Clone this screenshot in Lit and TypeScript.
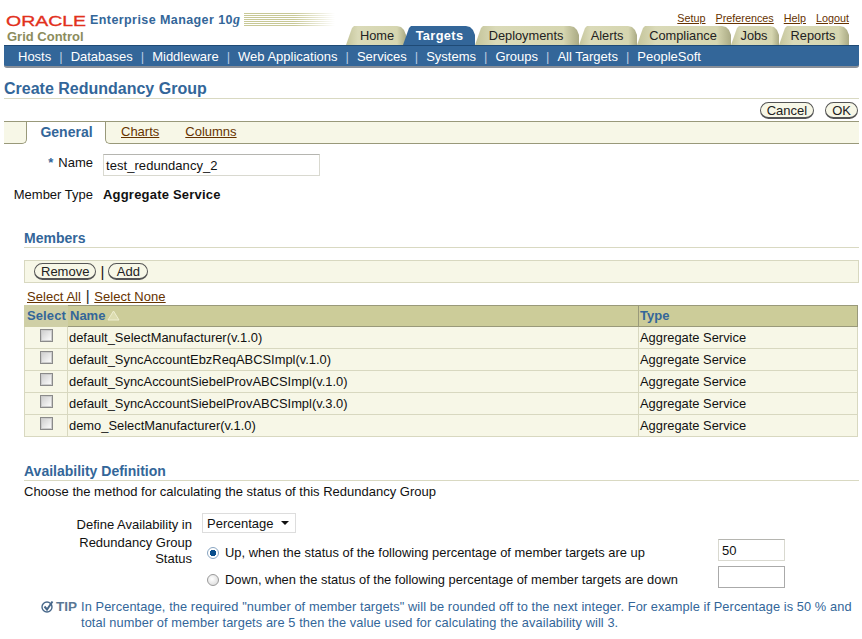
import { LitElement, html, css } from "lit";
import { customElement } from "lit/decorators.js";

const tabs = [
  { t: "Home", w: 60 },
  { t: "Targets", w: 72, active: true },
  { t: "Deployments", w: 104 },
  { t: "Alerts", w: 58 },
  { t: "Compliance", w: 94 },
  { t: "Jobs", w: 48 },
  { t: "Reports", w: 70 },
];
const nav = ["Hosts", "Databases", "Middleware", "Web Applications", "Services", "Systems", "Groups", "All Targets", "PeopleSoft"];
const rows = [
  "default_SelectManufacturer(v.1.0)",
  "default_SyncAccountEbzReqABCSImpl(v.1.0)",
  "default_SyncAccountSiebelProvABCSImpl(v.1.0)",
  "default_SyncAccountSiebelProvABCSImpl(v.3.0)",
  "demo_SelectManufacturer(v.1.0)",
];

@customElement("app-root")
export class AppRoot extends LitElement {
  static styles = css`
    :host { display: block; width: 862px; height: 639px; overflow: hidden; background: #fff; color: #111; font: 13px/15px "Liberation Sans", Arial, sans-serif; }
    a { color: #663300; text-decoration: underline; }
    .mast { display: flex; justify-content: space-between; height: 45px; }
    .brand { padding: 13px 0 0 6px; }
    .brand-top { display: flex; align-items: flex-start; height: 19px; }
    .oracle { display: block; width: 81px; height: 15px; }
    .oracle text { font: 15.5px "Liberation Sans", Arial, sans-serif; fill: #e2311d; stroke: #e2311d; stroke-width: .35px; }
    .em { margin-left: 3px; color: #336699; font-weight: bold; font-size: 12.5px; letter-spacing: .42px; white-space: nowrap; line-height: 14px; }
    .em i { font-family: "Liberation Serif", serif; font-size: 14px; }
    .stripes { width: 91px; height: 13px; margin: 0 0 0 4px; background: linear-gradient(to right, transparent 55%, #fff), repeating-linear-gradient(to bottom, #c8c896 0 1px, #fff 1px 2px); }
    .grid { margin: -3px 0 0 1px; color: #8c8c5c; font-weight: bold; font-size: 13px; }
    .right { display: flex; flex-direction: column; align-items: flex-end; padding-right: 13px; }
    .global { display: flex; gap: 10px; height: 26px; padding: 11px 0 0; box-sizing: border-box; font-size: 10.8px; line-height: 14px; }
    .tabs { display: flex; height: 19px; }
    .tab { display: flex; align-items: center; justify-content: center; box-sizing: border-box; padding: 0 2px 1px 0; color: #222; font-size: 12.8px; background: linear-gradient(to right, #c4c49a, #dadab8 20%, #d6d6b0 85%, #aaaa84); clip-path: polygon(0 100%, 6px 2px, 8px 0, calc(100% - 9px) 0, calc(100% - 5px) 1px, calc(100% - 2px) 4px, 100% 9px, 100% 100%); }
    .tab:first-child { padding: 0 0 1px 2px; }
    .tab.active { padding: 0 0 1px 1px; color: #fff; font-weight: bold; background: #336699; letter-spacing: .35px; margin-left: -3px; z-index: 1; }
    .nav { display: flex; align-items: center; height: 23px; margin: 0 3px 0 4px; padding: 0 0 0 14px; box-sizing: border-box; background: #336699; border-top: 1px solid #1f4a75; border-bottom: 2px solid #8a9099; border-radius: 0 0 3px 3px; color: #fff; font-size: 13px; white-space: nowrap; }
    .nav span.sep { margin: 0 8px; color: #b8cbe0; }
    h1 { margin: 12px 3px 0 4px; height: 18px; border-bottom: 1px solid #d9d9c2; color: #336699; font-size: 16px; line-height: 18px; }
    .actions { display: flex; justify-content: flex-end; gap: 11px; margin: 3px 4px 0 0; height: 18px; }
    .btn { display: inline-flex; align-items: center; height: 17px; box-sizing: border-box; padding: 0 6px; border: 1px solid #555; border-bottom-width: 2px; border-right-width: 1.5px; border-radius: 9px; background: #f7f7e7; color: #222; font-size: 13px; }
    .btn.add { padding: 0 7.5px; }
    .subtabs { display: flex; height: 23px; margin: 1px 3px 0 4px; box-sizing: border-box; border-top: 1px solid #99997a; }
    .sub-l, .sub-r { background: #f7f7e7; border-bottom: 1px solid #99997a; box-sizing: border-box; }
    .sub-l { width: 23px; border-right: 1px solid #99997a; border-radius: 0 0 5px 0; }
    .sub-r { flex: 1; border-left: 1px solid #99997a; border-radius: 0 0 0 5px; padding-left: 15px; line-height: 20px; }
    .sub-r a + a { margin-left: 26px; }
    .sel { width: 78px; color: #336699; font-weight: bold; font-size: 14px; text-align: center; line-height: 21px; padding-left: 1px; box-sizing: border-box; }
    .form1 { display: grid; grid-template-columns: 93px 1fr; column-gap: 10px; margin-top: 10px; align-items: start; }
    .form1 label { text-align: right; white-space: nowrap; }
    .name-l { padding-top: 1px; }
    .req { color: #336699; font-weight: bold; margin-right: 5px; }
    .input { box-sizing: border-box; border: 1px solid #d9d9d0; border-top-color: #b5b5b0; background: #fff; display: flex; align-items: center; padding: 1px 0 0 2px; height: 22px; }
    .name { width: 217px; letter-spacing: .06px; }
    .mt { margin-top: 10px; height: 18px; line-height: 18px; grid-column: 2; font-weight: bold; letter-spacing: .2px; }
    .mtl { margin-top: 10px; height: 18px; line-height: 18px; }
    h2 { margin: 0 3px 0 24px; color: #336699; font-size: 14px; line-height: 17px; height: 17px; border-bottom: 1px solid #d9d9c2; }
    .h-m { margin-top: 26px; }
    .toolbar { display: flex; align-items: center; gap: 4px; box-sizing: border-box; height: 23px; margin: 12px 3px 0 24px; padding-left: 9px; background: #f7f7e7; border: 1px solid #d8d8c0; }
    .toolbar .sep { font-size: 15px; }
    .sel-links { margin: 3px 3px 0 27px; height: 19px; line-height: 19px; font-size: 13px; letter-spacing: .05px; }
    .sel-links span { font-size: 15px; margin: 0 1px; color: #222; }
    table { border-collapse: collapse; table-layout: fixed; width: 834px; margin: 0 3px 0 24px; }
    th { height: 18px; padding: 0 0 2px 1px; background: #cccc99; color: #336699; font-size: 13px; text-align: left; border: 1px solid #99997a; border-left: 1px solid #fff; line-height: 15px; }
    th.s { background: #cfcfa6; border-color: #cfcfa6; padding-left: 2px; letter-spacing: .1px; }
    th.n { padding-left: 2px; }
    td { height: 20px; padding: 0 0 1px 1px; background: #f7f7e7; border: 1px solid #d8d8c0; font-size: 12.9px; white-space: nowrap; }
    td.c { text-align: center; }
    .tri { display: inline-block; vertical-align: -1px; margin-left: 2px; }
    .chk { display: inline-block; box-sizing: border-box; width: 13px; height: 13px; border: 1px solid #8a8a8a; background: linear-gradient(135deg, #ccc, #fff); box-shadow: inset 0 0 0 1px #ccc; vertical-align: 1px; }
    .h-a { margin-top: 26px; }
    .intro { margin: 3px 0 0 24px; height: 21px; }
    .avail { display: grid; grid-template-columns: 192px 1fr; column-gap: 10px; margin-top: 1px; }
    .avail .l { text-align: right; }
    .selectbox { display: flex; align-items: center; justify-content: space-between; box-sizing: border-box; width: 94px; height: 20px; margin-top: 7px; padding: 0 6px 0 4px; border: 1px solid #ddd; background: #fff; }
    .caret { width: 0; height: 0; border: 4px solid transparent; border-top: 4px solid #111; border-bottom: 0; }
    .opts { margin-top: 6px; }
    .opt { display: flex; align-items: center; height: 27px; width: 583px; }
    .opt .txt { margin-left: 6px; flex: 1; white-space: nowrap; font-size: 12.9px; }
    .radio { width: 12px; height: 12px; margin-left: 5px; border-radius: 50%; box-sizing: border-box; border: 1px solid #999; background: radial-gradient(circle at 40% 40%, #fff, #d5d5d5); }
    .radio.on { background: radial-gradient(circle, #0a4e8c 0 3px, #fff 3.5px); border-color: #8aa6c2; }
    .opt .input { width: 67px; flex: none; padding-left: 3px; margin-bottom: 5px; }
    .opt .input.dark { border: 1px solid #aaa; }
    .lab2 { padding-top: 2px; line-height: 16px; }
    .lab1 { padding-top: 11px; line-height: 15px; }
    .tip { display: flex; margin: 6px 0 0 41px; color: #336699; font-size: 12.8px; line-height: 16px; }
    .tip svg { flex: none; margin-top: 1px; }
    .tip b { flex: none; margin: 0 4px 0 2px; color: #5a7895; font-size: 13.5px; }
    .tip div { letter-spacing: .09px; width: 790px; white-space: nowrap; }
  `;

  render() {
    return html`
      <div class="mast">
        <div class="brand">
          <div class="brand-top">
            <svg class="oracle" viewBox="0 0 81 15"><text x="0" y="13" textLength="80" lengthAdjust="spacingAndGlyphs">ORACLE</text></svg>
            <span class="em">Enterprise Manager 10<i>g</i></span>
            <div class="stripes"></div>
          </div>
          <div class="grid">Grid Control</div>
        </div>
        <div class="right">
          <div class="global"><a>Setup</a><a>Preferences</a><a>Help</a><a>Logout</a></div>
          <div class="tabs">
            ${tabs.map((t) => html`<div class="tab ${t.active ? "active" : ""}" style="width:${t.w}px">${t.t}</div>`)}
          </div>
        </div>
      </div>
      <div class="nav">
        ${nav.map((n, i) => html`${i ? html`<span class="sep">|</span>` : ""}<span>${n}</span>`)}
      </div>
      <h1>Create Redundancy Group</h1>
      <div class="actions"><span class="btn">Cancel</span><span class="btn">OK</span></div>
      <div class="subtabs"><div class="sub-l"></div><div class="sel">General</div><div class="sub-r"><a>Charts</a><a>Columns</a></div></div>
      <div class="form1">
        <label class="name-l"><span class="req">*</span>Name</label>
        <div class="input name">test_redundancy_2</div>
        <label class="mtl">Member Type</label>
        <div class="mt">Aggregate Service</div>
      </div>
      <h2 class="h-m">Members</h2>
      <div class="toolbar"><span class="btn">Remove</span><span class="sep">|</span><span class="btn add">Add</span></div>
      <div class="sel-links"><a>Select All</a> <span>|</span> <a>Select None</a></div>
      <table>
        <colgroup><col style="width:43px" /><col style="width:571px" /><col /></colgroup>
        <tr>
          <th class="s">Select</th>
          <th class="n">Name<svg class="tri" width="13" height="11" viewBox="0 0 13 11"><path d="M6.5 1 12 10H1z" fill="#dcdcb0" stroke="#eeeed0" /></svg></th>
          <th>Type</th>
        </tr>
        ${rows.map((r) => html`<tr><td class="c"><span class="chk"></span></td><td>${r}</td><td>Aggregate Service</td></tr>`)}
      </table>
      <h2 class="h-a">Availability Definition</h2>
      <div class="intro">Choose the method for calculating the status of this Redundancy Group</div>
      <div class="avail">
        <div class="l lab1">Define Availability in</div>
        <div class="selectbox">Percentage<span class="caret"></span></div>
        <div class="l lab2">Redundancy Group<br />Status</div>
        <div class="opts">
          <div class="opt"><span class="radio on"></span><span class="txt">Up, when the status of the following percentage of member targets are up</span><span class="input">50</span></div>
          <div class="opt"><span class="radio"></span><span class="txt">Down, when the status of the following percentage of member targets are down</span><span class="input dark"></span></div>
        </div>
      </div>
      <div class="tip">
        <svg width="13" height="13" viewBox="0 0 13 13" fill="none" stroke="#48688a"><circle cx="6" cy="7" r="5" stroke-width="1.4" /><path d="M3.5 6.5 6 9.5 11.5 1.5" stroke-width="2" /></svg>
        <b>TIP</b>
        <div>In Percentage, the required "number of member targets" will be rounded off to the next integer. For example if Percentage is 50 % and<br />total number of member targets are 5 then the value used for calculating the availability will 3.</div>
      </div>
    `;
  }
}
